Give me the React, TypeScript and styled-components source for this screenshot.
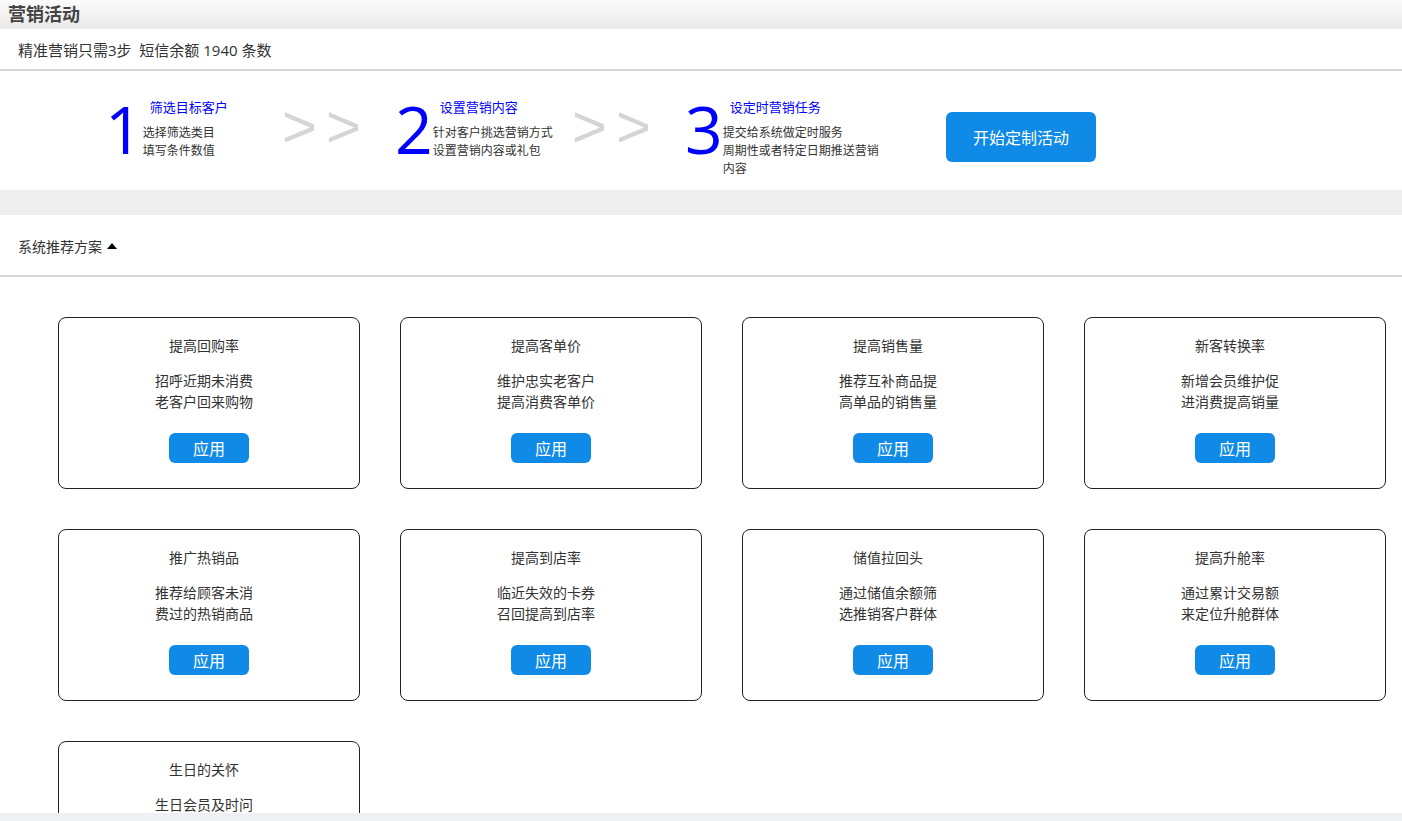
import styled, { createGlobalStyle } from "styled-components";

const GlobalStyle = createGlobalStyle`
  html, body {
    margin: 0;
    padding: 0;
    background: #eff0f4;
    font-family: "Open Sans", "Noto Sans CJK SC", sans-serif;
    color: #333;
  }
`;

interface Step {
  no: string;
  title: string;
  lines: string[];
}

interface Plan {
  title: string;
  lines: string[];
}

const steps: Step[] = [
  { no: "1", title: "筛选目标客户", lines: ["选择筛选类目", "填写条件数值"] },
  { no: "2", title: "设置营销内容", lines: ["针对客户挑选营销方式", "设置营销内容或礼包"] },
  { no: "3", title: "设定时营销任务", lines: ["提交给系统做定时服务", "周期性或者特定日期推送营销内容"] },
];

const plans: Plan[] = [
  { title: "提高回购率", lines: ["招呼近期未消费", "老客户回来购物"] },
  { title: "提高客单价", lines: ["维护忠实老客户", "提高消费客单价"] },
  { title: "提高销售量", lines: ["推荐互补商品提", "高单品的销售量"] },
  { title: "新客转换率", lines: ["新增会员维护促", "进消费提高销量"] },
  { title: "推广热销品", lines: ["推荐给顾客未消", "费过的热销商品"] },
  { title: "提高到店率", lines: ["临近失效的卡券", "召回提高到店率"] },
  { title: "储值拉回头", lines: ["通过储值余额筛", "选推销客户群体"] },
  { title: "提高升舱率", lines: ["通过累计交易额", "来定位升舱群体"] },
  { title: "生日的关怀", lines: ["生日会员及时问", "候送上生日祝福"] },
];

const App = () => {
  return (
    <>
      <GlobalStyle />
      <Page>
        <TitleBar>营销活动</TitleBar>
        <InfoRow>精准营销只需3步&nbsp;&nbsp;短信余额 1940 条数</InfoRow>
        <StepsSection>
          {steps.map((s, i) => (
            <StepGroup key={s.no}>
              {i > 0 && (
                <Arrows>
                  <span>&gt;</span>
                  <span>&gt;</span>
                </Arrows>
              )}
              <StepItem>
                <StepNo>{s.no}</StepNo>
                <StepText>
                  <StepTitle>{s.title}</StepTitle>
                  {s.lines.map((l) => (
                    <StepDesc key={l}>{l}</StepDesc>
                  ))}
                </StepText>
              </StepItem>
            </StepGroup>
          ))}
          <StartButton>开始定制活动</StartButton>
        </StepsSection>
        <Band />
        <SectionHead>
          系统推荐方案
          <Caret />
        </SectionHead>
        <CardGrid>
          {plans.map((p) => (
            <Card key={p.title}>
              <CardTitle>{p.title}</CardTitle>
              <CardDesc>
                {p.lines.map((l) => (
                  <div key={l}>{l}</div>
                ))}
              </CardDesc>
              <ApplyButton>应用</ApplyButton>
            </Card>
          ))}
        </CardGrid>
      </Page>
    </>
  );
};

export default App;

const Page = styled.div`
  height: 813px;
  overflow: hidden;
  background: #fff;
`;

const TitleBar = styled.div`
  height: 29px;
  line-height: 29px;
  padding-left: 8px;
  font-size: 18px;
  font-weight: bold;
  color: #444;
  background: linear-gradient(to bottom, #fbfbfb, #e9e9e9);
`;

const InfoRow = styled.div`
  height: 40px;
  line-height: 42px;
  padding-left: 18px;
  font-size: 15px;
  color: #333;
  border-bottom: 2px solid #d5d5d5;
`;

const StepsSection = styled.div`
  display: flex;
  align-items: flex-start;
  height: 119px;
  box-sizing: border-box;
  padding: 28px 0 0 105px;
`;

const StepGroup = styled.div`
  display: flex;
  align-items: flex-start;
`;

const Arrows = styled.div`
  display: flex;
  gap: 9px;
  width: 113px;
  margin: -2px 0 0 -3px;
  font-family: "Liberation Sans", sans-serif;
  font-size: 60px;
  line-height: 60px;
  color: #d5d5d5;
`;

const StepItem = styled.div`
  display: flex;
  width: 180px;
`;

const StepNo = styled.div`
  flex: 0 0 37px;
  margin-top: -4px;
  font-family: "Open Sans", sans-serif;
  font-size: 66px;
  line-height: 66px;
  color: #0000ff;
`;

const StepText = styled.div`
  flex: 0 0 160px;
`;

const StepTitle = styled.div`
  padding-left: 7px;
  margin-bottom: 9px;
  font-size: 13px;
  line-height: 16px;
  color: #0000ff;
`;

const StepDesc = styled.div`
  font-size: 12px;
  line-height: 18px;
  color: #333;
`;

const StartButton = styled.button`
  width: 150px;
  height: 50px;
  margin: 13px 0 0 81px;
  border: none;
  border-radius: 6px;
  background: #0f8ae6;
  color: #fff;
  font-family: "Open Sans", "Noto Sans CJK SC", sans-serif;
  font-size: 16px;
  cursor: pointer;
`;

const Band = styled.div`
  height: 25px;
  background: #efefef;
`;

const SectionHead = styled.div`
  display: flex;
  align-items: center;
  height: 60px;
  padding: 2px 0 0 18px;
  box-sizing: content-box;
  height: 58px;
  font-size: 14px;
  color: #333;
  border-bottom: 2px solid #d5d5d5;
`;

const Caret = styled.span`
  width: 0;
  height: 0;
  margin-left: 5px;
  border-left: 5px solid transparent;
  border-right: 5px solid transparent;
  border-bottom: 6px solid #000;
`;

const CardGrid = styled.div`
  display: grid;
  grid-template-columns: repeat(4, 302px);
  gap: 40px;
  padding: 40px 0 0 58px;
`;

const Card = styled.div`
  display: flex;
  flex-direction: column;
  align-items: center;
  height: 172px;
  box-sizing: border-box;
  padding-top: 19px;
  border: 1px solid #222;
  border-radius: 8px;
`;

const CardTitle = styled.div`
  padding-right: 10px;
  font-size: 14px;
  line-height: 18px;
  color: #333;
`;

const CardDesc = styled.div`
  margin-top: 15px;
  padding-right: 10px;
  font-size: 14px;
  line-height: 21px;
  text-align: center;
  color: #333;
`;

const ApplyButton = styled.button`
  width: 80px;
  height: 30px;
  margin-top: 21px;
  border: none;
  border-radius: 6px;
  background: #0f8ae6;
  color: #fff;
  font-family: "Open Sans", "Noto Sans CJK SC", sans-serif;
  font-size: 16px;
  cursor: pointer;
`;
